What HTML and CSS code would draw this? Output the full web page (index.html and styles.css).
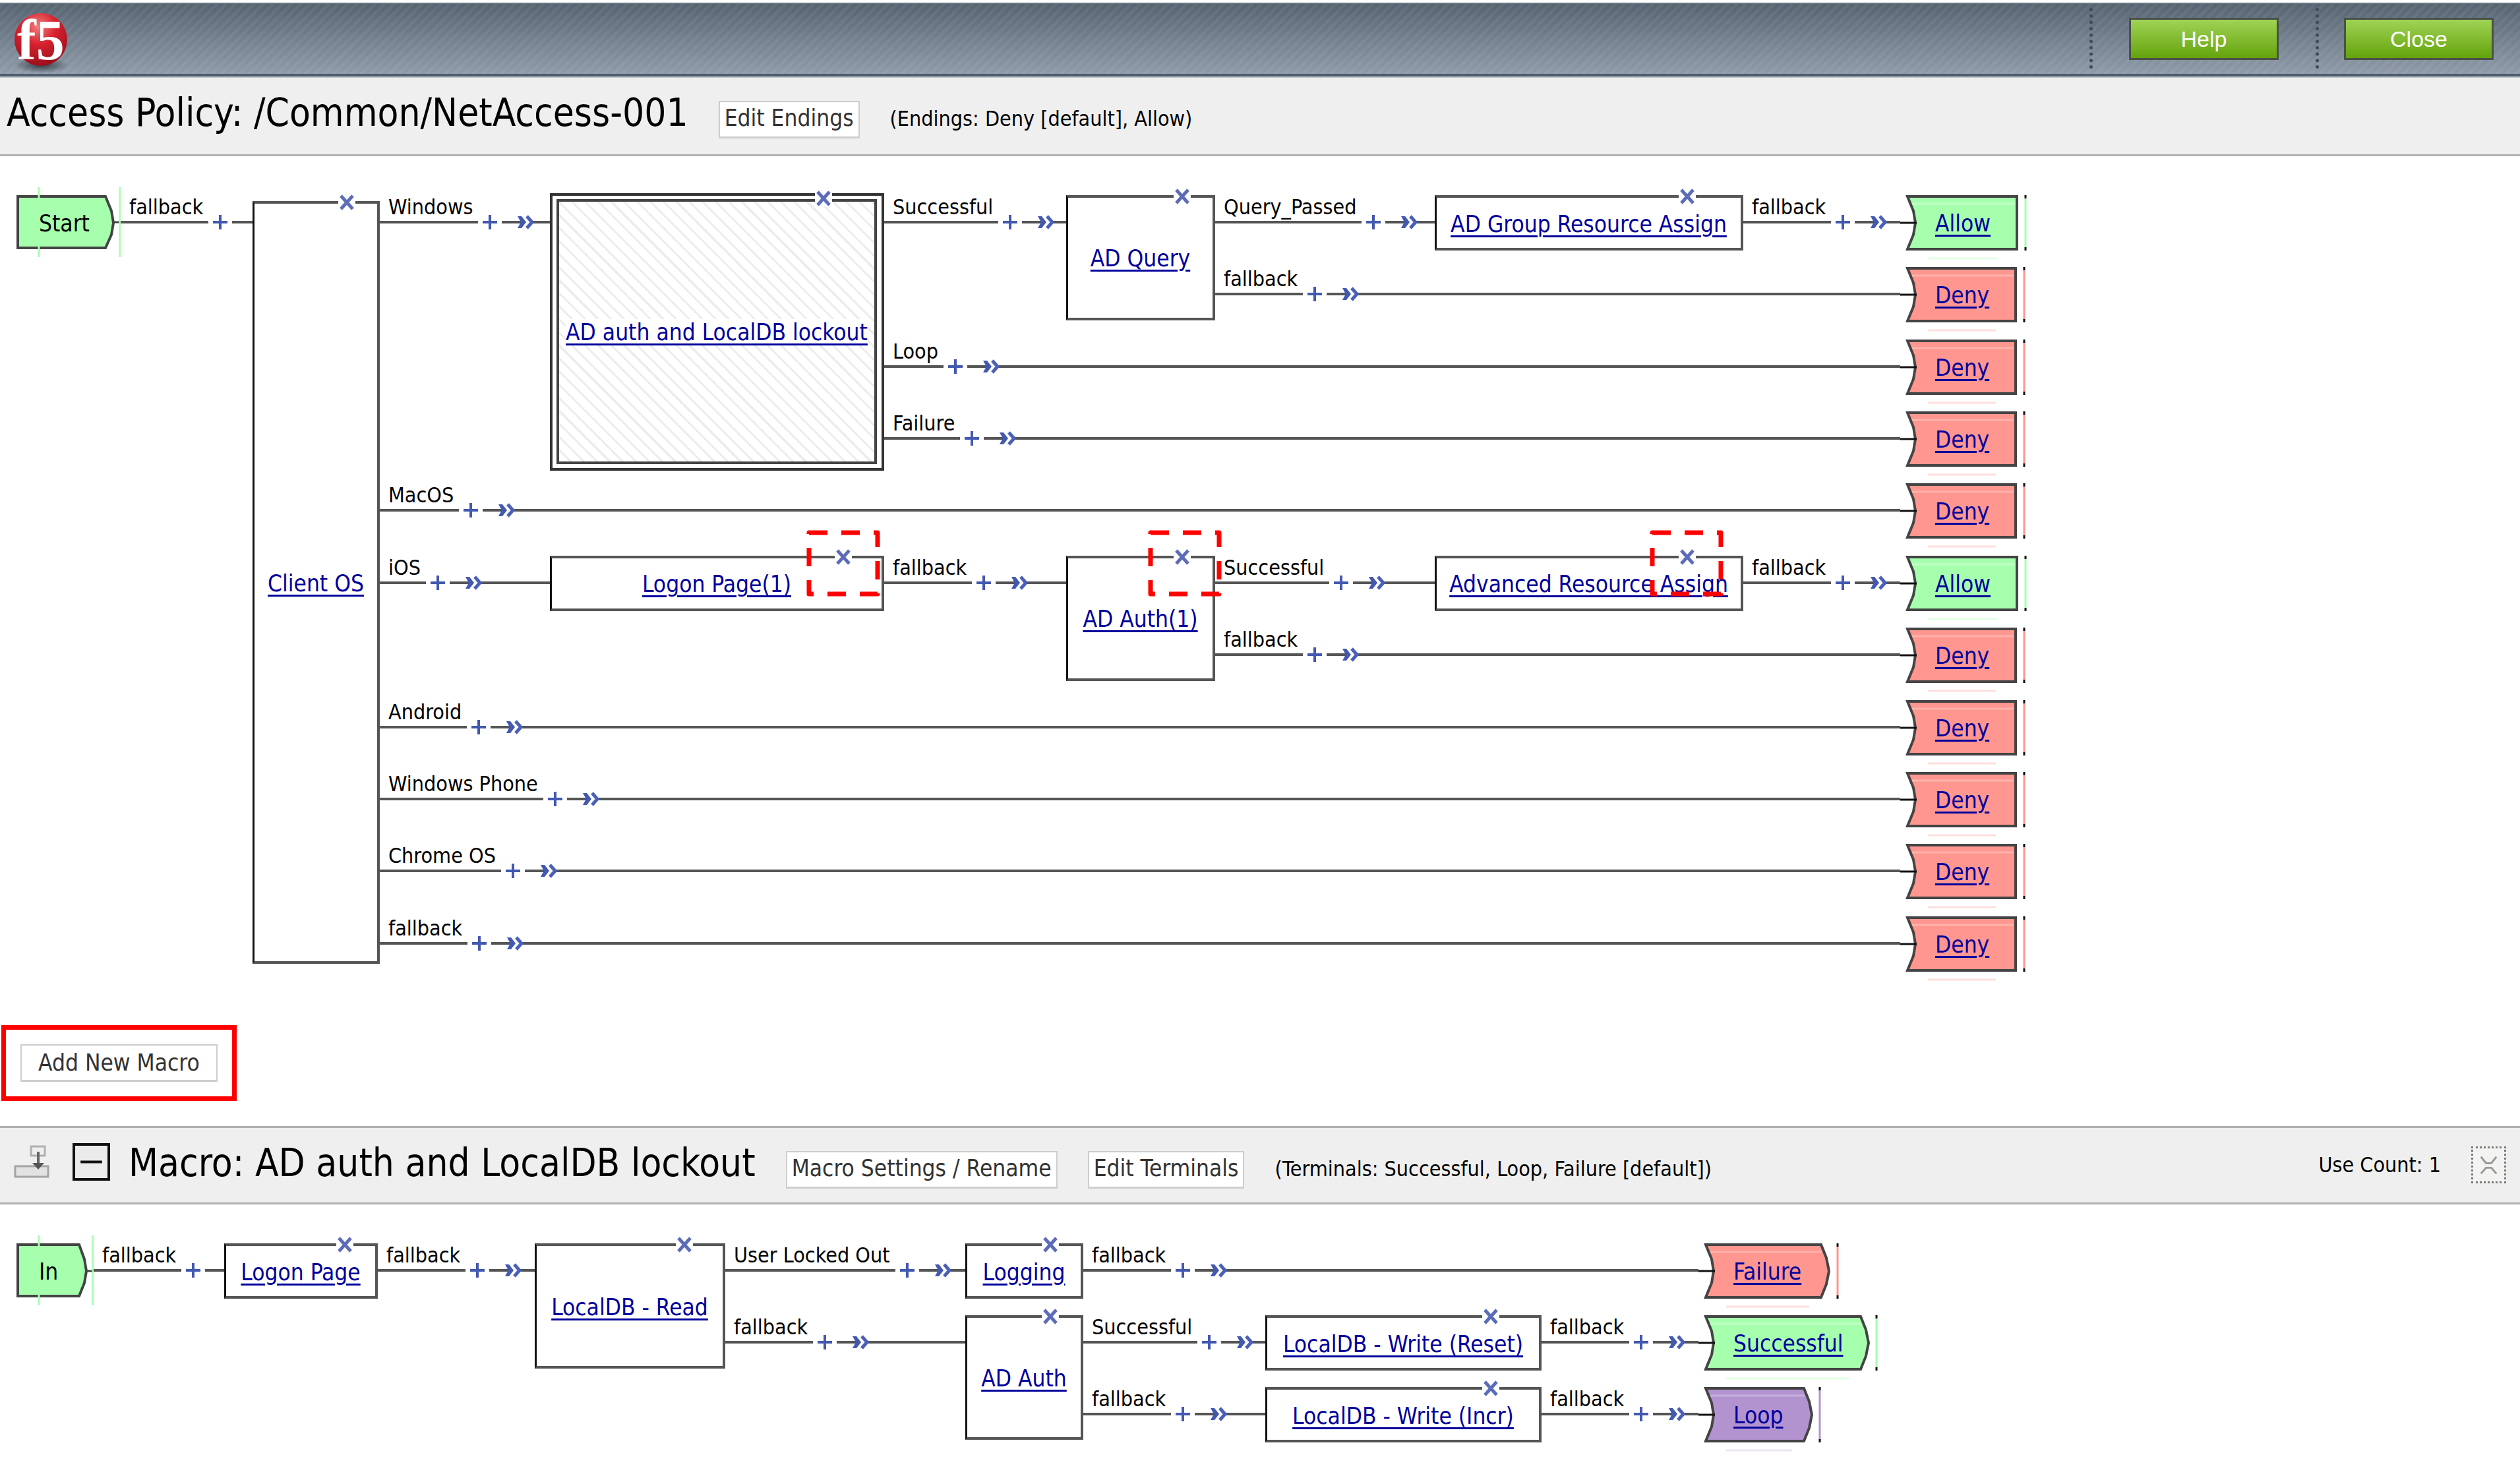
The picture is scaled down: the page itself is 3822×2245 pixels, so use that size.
FILE: index.html
```html
<!DOCTYPE html>
<html lang="en">
<head>
<meta charset="utf-8">
<title>Access Policy: /Common/NetAccess-001</title>
<link rel="stylesheet" href="styles.css">
</head>
<body>

<svg class="sprite" aria-hidden="true">
  <symbol id="plus" viewBox="0 0 36 24"><path d="M7 12h22M18 1v22" fill="none" stroke="#4358b0" stroke-width="4"/></symbol>
  <symbol id="cross" viewBox="0 0 26 24"><path d="M4 2l18 20M22 2L4 22" fill="none" stroke="#5d6cb8" stroke-width="5"/></symbol>
  <symbol id="arrows" viewBox="0 0 28 24">
    <path d="M0 12h12M22 12h6" stroke="#50545f" stroke-width="4"/>
    <path d="M1 3h6l7 9-7 9H1l5-9z" fill="#4358b0"/>
    <path d="M15 3l8 9-8 9" fill="none" stroke="#4a5fb8" stroke-width="5"/>
  </symbol>
  <symbol id="flag-allow" viewBox="0 0 196 112">
    <path d="M11 14H177V94H11L20 72L23 54L20 36Z" fill="#a5ffad" stroke="#444" stroke-width="4"/>
    <path d="M18 25H174" stroke="#c0ffc6" stroke-width="3"/>
    <path d="M42 108H148" stroke="#e4ffe6" stroke-width="3"/>
    <path d="M190 16V92" stroke="#a5ffad" stroke-width="3"/>
    <path d="M190 12v5M190 91v5M0 54H25" stroke="#111" stroke-width="3"/>
  </symbol>
  <symbol id="flag-deny" viewBox="0 0 196 112">
    <path d="M11 14H175V94H11L20 72L23 54L20 36Z" fill="#ff968f" stroke="#444" stroke-width="4"/>
    <path d="M18 25H172" stroke="#ffb2ad" stroke-width="3"/>
    <path d="M42 108H145" stroke="#ffdfdd" stroke-width="3"/>
    <path d="M188 16V92" stroke="#ff968f" stroke-width="3"/>
    <path d="M188 12v5M188 91v5M0 54H25" stroke="#111" stroke-width="3"/>
  </symbol>
  <symbol id="flag-failure" viewBox="0 0 280 112">
    <path d="M11 14H186L194 34L198 54L194 74L186 94H11L20 72L23 54L20 36Z" fill="#ff968f" stroke="#444" stroke-width="4"/>
    <path d="M18 25H187" stroke="#ffb2ad" stroke-width="3"/>
    <path d="M42 108H168" stroke="#ffdfdd" stroke-width="3"/>
    <path d="M211 16V92" stroke="#ff968f" stroke-width="3"/>
    <path d="M211 12v5M211 91v5M0 54H25" stroke="#111" stroke-width="3"/>
  </symbol>
  <symbol id="flag-successful" viewBox="0 0 280 112">
    <path d="M11 14H246L254 34L258 54L254 74L246 94H11L20 72L23 54L20 36Z" fill="#a5ffad" stroke="#444" stroke-width="4"/>
    <path d="M18 25H247" stroke="#c0ffc6" stroke-width="3"/>
    <path d="M42 108H228" stroke="#e4ffe6" stroke-width="3"/>
    <path d="M270 16V92" stroke="#a5ffad" stroke-width="3"/>
    <path d="M270 12v5M270 91v5M0 54H25" stroke="#111" stroke-width="3"/>
  </symbol>
  <symbol id="flag-loop" viewBox="0 0 280 112">
    <path d="M11 14H160L168 34L172 54L168 74L160 94H11L20 72L23 54L20 36Z" fill="#b292cf" stroke="#444" stroke-width="4"/>
    <path d="M18 25H161" stroke="#c6afdd" stroke-width="3"/>
    <path d="M42 108H142" stroke="#ece4f3" stroke-width="3"/>
    <path d="M184 16V92" stroke="#b292cf" stroke-width="3"/>
    <path d="M184 12v5M184 91v5M0 54H25" stroke="#111" stroke-width="3"/>
  </symbol>
</svg>

<header class="topbar">
  <svg class="logo" viewBox="0 0 96 96" role="img" aria-label="f5">
    <defs>
      <radialGradient id="ball" cx="45%" cy="25%" r="75%">
        <stop offset="0" stop-color="#f08080"/><stop offset=".45" stop-color="#d8222f"/><stop offset="1" stop-color="#9c0f1c"/>
      </radialGradient>
      <radialGradient id="shade"><stop offset="0" stop-color="#222b33" stop-opacity=".8"/><stop offset="1" stop-color="#222b33" stop-opacity="0"/></radialGradient>
    </defs>
    <ellipse cx="49" cy="83" rx="42" ry="12" fill="url(#shade)"/>
    <circle cx="48" cy="44" r="40" fill="url(#ball)"/>
    <text class="logo-text" x="12" y="74">f5</text>
  </svg>
  <div class="topbar-cell"><button class="action" type="button">Help</button></div>
  <div class="topbar-cell"><button class="action" type="button">Close</button></div>
</header>

<main>
<section>
  <div class="titlebar">
    <h1 class="title">Access Policy: /Common/NetAccess-001</h1>
    <button class="plain" type="button">Edit Endings</button>
    <span class="note">(Endings: Deny [default], Allow)</span>
  </div>

  <div class="flow policy">
    <div class="entry">
      <svg class="entry-shape start" viewBox="0 0 158 106" aria-hidden="true">
        <path d="M2 14H135L144 36L147 54L144 72L135 92H2Z" fill="#a5ffad" stroke="#444" stroke-width="4"/>
        <path d="M146 53H158" stroke="#444" stroke-width="3"/>
        <path d="M34 0V17M34 88V106M157 0V106" stroke="#a5ffad" stroke-width="3"/>
      </svg>
      <span class="entry-name">Start</span>
    </div>
    <div class="link to-client"><span class="label">fallback</span><button class="add" type="button" aria-label="Add item"><svg><use href="#plus"/></svg></button><i class="line"></i></div>
    <div class="box tall client"><a href="#">Client OS</a><button class="remove at-50" type="button" aria-label="Remove"><svg><use href="#cross"/></svg></button></div>
    <div class="branches">

      <div class="branch rows-4">
        <div class="link to-a"><span class="label">Windows</span><button class="add" type="button" aria-label="Add item"><svg><use href="#plus"/></svg></button><i class="dash"></i><svg class="arrows"><use href="#arrows"/></svg><i class="line"></i></div>
        <div class="box macro col-a"><span class="hatch"><a href="#">AD auth and LocalDB lockout</a></span><button class="remove at-92" type="button" aria-label="Remove"><svg><use href="#cross"/></svg></button></div>
        <div class="branches">
          <div class="branch rows-2">
            <div class="link to-b"><span class="label">Successful</span><button class="add" type="button" aria-label="Add item"><svg><use href="#plus"/></svg></button><i class="dash"></i><svg class="arrows"><use href="#arrows"/></svg><i class="line"></i></div>
            <div class="box tall col-b"><a href="#">AD Query</a><button class="remove at-50" type="button" aria-label="Remove"><svg><use href="#cross"/></svg></button></div>
            <div class="branches">
              <div class="branch">
                <div class="link to-c"><span class="label">Query_Passed</span><button class="add" type="button" aria-label="Add item"><svg><use href="#plus"/></svg></button><i class="dash"></i><svg class="arrows"><use href="#arrows"/></svg><i class="line"></i></div>
                <div class="box col-c"><a href="#">AD Group Resource Assign</a><button class="remove at-84" type="button" aria-label="Remove"><svg><use href="#cross"/></svg></button></div>
                <div class="link to-end"><span class="label">fallback</span><button class="add" type="button" aria-label="Add item"><svg><use href="#plus"/></svg></button><i class="dash"></i><svg class="arrows"><use href="#arrows"/></svg><i class="line"></i></div>
                <div class="ending"><svg><use href="#flag-allow"/></svg><a href="#">Allow</a></div>
              </div>
              <div class="branch">
                <div class="link"><span class="label">fallback</span><button class="add" type="button" aria-label="Add item"><svg><use href="#plus"/></svg></button><i class="dash"></i><svg class="arrows"><use href="#arrows"/></svg><i class="line"></i></div>
                <div class="ending"><svg><use href="#flag-deny"/></svg><a href="#">Deny</a></div>
              </div>
            </div>
          </div>
          <div class="branch">
            <div class="link"><span class="label">Loop</span><button class="add" type="button" aria-label="Add item"><svg><use href="#plus"/></svg></button><i class="dash"></i><svg class="arrows"><use href="#arrows"/></svg><i class="line"></i></div>
            <div class="ending"><svg><use href="#flag-deny"/></svg><a href="#">Deny</a></div>
          </div>
          <div class="branch">
            <div class="link"><span class="label">Failure</span><button class="add" type="button" aria-label="Add item"><svg><use href="#plus"/></svg></button><i class="dash"></i><svg class="arrows"><use href="#arrows"/></svg><i class="line"></i></div>
            <div class="ending"><svg><use href="#flag-deny"/></svg><a href="#">Deny</a></div>
          </div>
        </div>
      </div>

      <div class="branch">
        <div class="link"><span class="label">MacOS</span><button class="add" type="button" aria-label="Add item"><svg><use href="#plus"/></svg></button><i class="dash"></i><svg class="arrows"><use href="#arrows"/></svg><i class="line"></i></div>
        <div class="ending"><svg><use href="#flag-deny"/></svg><a href="#">Deny</a></div>
      </div>

      <div class="branch rows-2">
        <div class="link to-a"><span class="label">iOS</span><button class="add" type="button" aria-label="Add item"><svg><use href="#plus"/></svg></button><i class="dash"></i><svg class="arrows"><use href="#arrows"/></svg><i class="line"></i></div>
        <div class="box col-a"><a href="#">Logon Page(1)</a><button class="remove at-60" type="button" aria-label="Remove"><svg><use href="#cross"/></svg></button><svg class="callout callout-logon"><use href="#callout"/></svg></div>
        <div class="link to-b"><span class="label">fallback</span><button class="add" type="button" aria-label="Add item"><svg><use href="#plus"/></svg></button><i class="dash"></i><svg class="arrows"><use href="#arrows"/></svg><i class="line"></i></div>
        <div class="box tall col-b"><a href="#">AD Auth(1)</a><button class="remove at-50" type="button" aria-label="Remove"><svg><use href="#cross"/></svg></button><svg class="callout callout-auth"><use href="#callout"/></svg></div>
        <div class="branches">
          <div class="branch">
            <div class="link to-c"><span class="label">Successful</span><button class="add" type="button" aria-label="Add item"><svg><use href="#plus"/></svg></button><i class="dash"></i><svg class="arrows"><use href="#arrows"/></svg><i class="line"></i></div>
            <div class="box col-c"><a href="#">Advanced Resource Assign</a><button class="remove at-84" type="button" aria-label="Remove"><svg><use href="#cross"/></svg></button><svg class="callout callout-assign"><use href="#callout"/></svg></div>
            <div class="link to-end"><span class="label">fallback</span><button class="add" type="button" aria-label="Add item"><svg><use href="#plus"/></svg></button><i class="dash"></i><svg class="arrows"><use href="#arrows"/></svg><i class="line"></i></div>
            <div class="ending"><svg><use href="#flag-allow"/></svg><a href="#">Allow</a></div>
          </div>
          <div class="branch">
            <div class="link"><span class="label">fallback</span><button class="add" type="button" aria-label="Add item"><svg><use href="#plus"/></svg></button><i class="dash"></i><svg class="arrows"><use href="#arrows"/></svg><i class="line"></i></div>
            <div class="ending"><svg><use href="#flag-deny"/></svg><a href="#">Deny</a></div>
          </div>
        </div>
      </div>

      <div class="branch">
        <div class="link"><span class="label">Android</span><button class="add" type="button" aria-label="Add item"><svg><use href="#plus"/></svg></button><i class="dash"></i><svg class="arrows"><use href="#arrows"/></svg><i class="line"></i></div>
        <div class="ending"><svg><use href="#flag-deny"/></svg><a href="#">Deny</a></div>
      </div>
      <div class="branch">
        <div class="link"><span class="label">Windows Phone</span><button class="add" type="button" aria-label="Add item"><svg><use href="#plus"/></svg></button><i class="dash"></i><svg class="arrows"><use href="#arrows"/></svg><i class="line"></i></div>
        <div class="ending"><svg><use href="#flag-deny"/></svg><a href="#">Deny</a></div>
      </div>
      <div class="branch">
        <div class="link"><span class="label">Chrome OS</span><button class="add" type="button" aria-label="Add item"><svg><use href="#plus"/></svg></button><i class="dash"></i><svg class="arrows"><use href="#arrows"/></svg><i class="line"></i></div>
        <div class="ending"><svg><use href="#flag-deny"/></svg><a href="#">Deny</a></div>
      </div>
      <div class="branch">
        <div class="link"><span class="label">fallback</span><button class="add" type="button" aria-label="Add item"><svg><use href="#plus"/></svg></button><i class="dash"></i><svg class="arrows"><use href="#arrows"/></svg><i class="line"></i></div>
        <div class="ending"><svg><use href="#flag-deny"/></svg><a href="#">Deny</a></div>
      </div>
    </div>
  </div>

  <svg class="sprite" aria-hidden="true">
    <symbol id="callout" viewBox="0 0 112 101"><path d="M4 4H108V97H4Z" fill="none" stroke="#f00" stroke-width="7" stroke-dasharray="28 21" stroke-linejoin="round"/></symbol>
  </svg>

  <div class="new-macro"><button class="plain wide" type="button">Add New Macro</button></div>
</section>

<section>
  <div class="titlebar macro-title">
    <div class="tools">
      <svg class="insert" viewBox="0 0 54 50" aria-hidden="true">
        <path d="M26 2H47V16H26Z" fill="none" stroke="#b0b0b0" stroke-width="3"/>
        <path d="M2 32H52V48H2Z" fill="#e2e2e2" stroke="#a4a4a4" stroke-width="3"/>
        <path d="M37 10V28" stroke="#666" stroke-width="4"/>
        <path d="M28 27H46L37 37Z" fill="#555"/>
      </svg>
      <button class="collapse" type="button" aria-label="Collapse"><svg viewBox="0 0 48 48"><path d="M8 24H40" stroke="#111" stroke-width="4"/></svg></button>
    </div>
    <h2 class="title">Macro: AD auth and LocalDB lockout</h2>
    <button class="plain" type="button">Macro Settings / Rename</button>
    <button class="plain" type="button">Edit Terminals</button>
    <span class="note">(Terminals: Successful, Loop, Failure [default])</span>
    <div class="usage">
      <span>Use Count: 1</span>
      <button class="discard" type="button" aria-label="Delete macro"><svg viewBox="0 0 48 50"><path d="M12 12L20 22H28L36 12M12 38L20 29H28L36 38" fill="none" stroke="#999" stroke-width="3"/></svg></button>
    </div>
  </div>

  <div class="flow">
    <div class="entry">
      <svg class="entry-shape in" viewBox="0 0 117 106" aria-hidden="true">
        <path d="M2 14H95L103 36L106 54L103 72L95 92H2Z" fill="#a5ffad" stroke="#444" stroke-width="4"/>
        <path d="M105 54H117" stroke="#444" stroke-width="3"/>
        <path d="M34 0V17M34 88V106M116 0V106" stroke="#a5ffad" stroke-width="3"/>
      </svg>
      <span class="entry-name">In</span>
    </div>
    <div class="link to-logon"><span class="label">fallback</span><button class="add" type="button" aria-label="Add item"><svg><use href="#plus"/></svg></button><i class="line"></i></div>
    <div class="box logon"><a href="#">Logon Page</a><button class="remove at-50" type="button" aria-label="Remove"><svg><use href="#cross"/></svg></button></div>
    <div class="link to-end"><span class="label">fallback</span><button class="add" type="button" aria-label="Add item"><svg><use href="#plus"/></svg></button><i class="dash"></i><svg class="arrows"><use href="#arrows"/></svg><i class="line"></i></div>
    <div class="box read"><a href="#">LocalDB - Read</a><button class="remove at-60" type="button" aria-label="Remove"><svg><use href="#cross"/></svg></button></div>
    <div class="branches">
      <div class="branch">
        <div class="link to-logging"><span class="label">User Locked Out</span><button class="add" type="button" aria-label="Add item"><svg><use href="#plus"/></svg></button><i class="dash"></i><svg class="arrows"><use href="#arrows"/></svg><i class="line"></i></div>
        <div class="box auth"><a href="#">Logging</a><button class="remove at-50" type="button" aria-label="Remove"><svg><use href="#cross"/></svg></button></div>
        <div class="link"><span class="label">fallback</span><button class="add" type="button" aria-label="Add item"><svg><use href="#plus"/></svg></button><i class="dash"></i><svg class="arrows"><use href="#arrows"/></svg><i class="line"></i></div>
        <div class="ending terminal"><svg><use href="#flag-failure"/></svg><a href="#">Failure</a></div>
      </div>
      <div class="branch rows-2">
        <div class="link to-logging"><span class="label">fallback</span><button class="add" type="button" aria-label="Add item"><svg><use href="#plus"/></svg></button><i class="dash"></i><svg class="arrows"><use href="#arrows"/></svg><i class="line"></i></div>
        <div class="box tall auth"><a href="#">AD Auth</a><button class="remove at-50" type="button" aria-label="Remove"><svg><use href="#cross"/></svg></button></div>
        <div class="branches">
          <div class="branch">
            <div class="link to-b"><span class="label">Successful</span><button class="add" type="button" aria-label="Add item"><svg><use href="#plus"/></svg></button><i class="dash"></i><svg class="arrows"><use href="#arrows"/></svg><i class="line"></i></div>
            <div class="box write"><a href="#">LocalDB - Write (Reset)</a><button class="remove at-76" type="button" aria-label="Remove"><svg><use href="#cross"/></svg></button></div>
            <div class="link to-end"><span class="label">fallback</span><button class="add" type="button" aria-label="Add item"><svg><use href="#plus"/></svg></button><i class="dash"></i><svg class="arrows"><use href="#arrows"/></svg><i class="line"></i></div>
            <div class="ending terminal"><svg><use href="#flag-successful"/></svg><a href="#">Successful</a></div>
          </div>
          <div class="branch">
            <div class="link to-b"><span class="label">fallback</span><button class="add" type="button" aria-label="Add item"><svg><use href="#plus"/></svg></button><i class="dash"></i><svg class="arrows"><use href="#arrows"/></svg><i class="line"></i></div>
            <div class="box write"><a href="#">LocalDB - Write (Incr)</a><button class="remove at-76" type="button" aria-label="Remove"><svg><use href="#cross"/></svg></button></div>
            <div class="link to-end"><span class="label">fallback</span><button class="add" type="button" aria-label="Add item"><svg><use href="#plus"/></svg></button><i class="dash"></i><svg class="arrows"><use href="#arrows"/></svg><i class="line"></i></div>
            <div class="ending terminal"><svg><use href="#flag-loop"/></svg><a href="#">Loop</a></div>
          </div>
        </div>
      </div>
    </div>
  </div>
</section>
</main>
</body>
</html>
```
FILE: styles.css
```css
* { box-sizing: border-box; }

body {
  margin: 0;
  background: #fff;
  color: #000;
  font: 32px/36px "DejaVu Sans Condensed", "DejaVu Sans", sans-serif;
}

button {
  margin: 0;
  padding: 0;
  border: 0;
  border-radius: 0;
  background: none;
  font: inherit;
  cursor: pointer;
}

svg { display: block; flex: none; }
.sprite { position: absolute; width: 0; height: 0; }

/* Top bar */
.topbar {
  display: flex;
  align-items: stretch;
  height: 112px;
  margin-top: 4px;
  border-top: 2px solid #6b7782;
  border-bottom: 4px solid #4c5e70;
  background:
    repeating-linear-gradient(135deg, rgba(255, 255, 255, .05) 0 5px, transparent 5px 10px),
    linear-gradient(#566471, #8f9ba8);
}
.logo { width: 96px; height: 96px; margin: 10px auto 0 14px; overflow: visible; }
.logo-text { fill: #fff; font: bold 86px "Liberation Serif", serif; }
.topbar-cell {
  display: flex;
  align-items: flex-start;
  margin: 6px 0 8px;
  padding: 15px 40px 0 55px;
  border-left: 5px dotted #3d4a57;
}
.topbar-cell + .topbar-cell { padding-left: 38px; }
.topbar-cell:nth-last-child(2) { padding-right: 56px; }
.action {
  width: 227px;
  height: 64px;
  border: 3px solid #4a5148;
  background: linear-gradient(#9fd355, #64a30c);
  color: #fff;
  font: 34px/56px "Liberation Sans", sans-serif;
}

/* Section title bars */
.titlebar {
  display: flex;
  align-items: baseline;
  gap: 46px;
  height: 121px;
  padding: 19px 21px 0 10px;
  border-top: 2px solid #c4c6c8;
  border-bottom: 3px solid #b0b0b0;
  background: #efefef;
}
.macro-title { height: 119px; border-top: 3px solid #b0b0b0; }
.title { margin: 0; font-size: 58px; line-height: 68px; font-weight: normal; white-space: nowrap; }
.note { white-space: nowrap; }
.plain {
  height: 57px;
  padding: 0 7px 3px;
  border: 2px solid #cdcdcd;
  border-bottom-width: 3px;
  background: #fff;
  color: #333;
  font-size: 35px;
  line-height: 49px;
  white-space: nowrap;
}
.plain.wide { padding: 0 25px; }

.tools {
  display: flex;
  align-self: flex-start;
  align-items: center;
  gap: 35px;
  height: 64px;
  margin: 0 -18px 0 11px;
}
.insert { width: 54px; height: 50px; }
.collapse { width: 57px; height: 57px; border: 4px solid #111; background: #ebebeb; }
.usage {
  display: flex;
  align-self: flex-start;
  align-items: center;
  gap: 46px;
  height: 74px;
  margin-left: auto;
}
.discard { width: 53px; height: 56px; border: 3px dotted #777; background: #f3f3f1; }

/* Policy diagram */
.flow {
  display: flex;
  width: max-content;
  padding: 47px 0 43px 25px;
}
.policy { min-height: 1293px; }

.branches { display: flex; flex: 1 0 auto; flex-direction: column; }
.branch { display: flex; flex: 1 0 109px; }
.rows-2 { flex: 2 0 218px; }
.rows-4 { flex: 4 0 436px; }

.entry { position: relative; height: 106px; }
.entry-shape { height: 106px; }
.start { width: 158px; }
.in { width: 117px; }
.entry-name { position: absolute; top: 0; left: 34px; font-size: 35px; line-height: 110px; }

.link { display: flex; flex: 1 0 auto; align-items: center; height: 106px; }
.label {
  display: flex;
  align-self: flex-start;
  align-items: flex-end;
  height: 55px;
  padding: 0 8px 3px 13px;
  border-bottom: 4px solid #555;
  white-space: nowrap;
}
.add svg { width: 36px; height: 24px; }
.dash { width: 23px; height: 4px; background: #555; }
.arrows { width: 28px; height: 24px; }
.line { flex: 1; height: 4px; background: #555; }

.to-client { flex: 0 0 200px; }
.to-logon { flex: 0 0 198px; }
.to-a { flex: 0 0 258px; }
.to-b { flex: 0 0 276px; }
.to-c { flex: 0 0 333px; }
.to-end { flex: 0 0 238px; }
.to-logging { flex: 0 0 364px; }

.box {
  position: relative;
  display: flex;
  flex: none;
  align-items: center;
  justify-content: center;
  height: 84px;
  margin-top: 12px;
  padding-top: 3px;
  border: 4px solid #555;
  border-left: 3px solid #111;
  background: #fff;
}
.box a, .ending a {
  color: #00009c;
  font-size: 35px;
  line-height: 40px;
  white-space: nowrap;
  text-decoration-thickness: 3px;
  text-underline-offset: 5px;
}
.tall { height: auto; margin-bottom: 17px; }
.client { width: 193px; margin-top: 21px; margin-bottom: 25px; }
.col-a { width: 507px; }
.col-b { width: 226px; }
.col-c { width: 468px; }
.logon { width: 233px; }
.read { width: 289px; height: 190px; }
.auth { width: 179px; }
.write { width: 419px; }

.macro {
  align-items: stretch;
  height: auto;
  margin: 9px 0 7px;
  padding: 5px 7px 6px 6px;
  border: 4px solid #333;
}
.hatch {
  display: flex;
  flex: 1;
  align-items: center;
  justify-content: center;
  padding-top: 2px;
  border: 4px solid #444;
  background: repeating-linear-gradient(45deg, #fff 0 11px, #ececec 11px 14px);
}
.hatch a { background: #fff; }

.remove { position: absolute; top: -14px; background: #fff; }
.remove svg { width: 26px; height: 24px; }
.macro .remove { top: -8px; }
.at-50 { right: 33px; }
.at-60 { right: 45px; }
.at-76 { right: 60px; }
.at-84 { right: 68px; }
.at-92 { right: 75px; }

.callout { position: absolute; top: -43px; width: 112px; height: 101px; pointer-events: none; }
.callout-logon { right: 2px; }
.callout-auth { right: -14px; }
.callout-assign { right: 26px; }

.ending { position: relative; flex: none; width: 196px; height: 106px; padding-left: 53px; }
.ending svg { position: absolute; top: 0; left: 0; width: 196px; height: 112px; }
.ending a { position: relative; line-height: 110px; }
.ending.terminal, .terminal svg { width: 280px; }

.new-macro {
  width: max-content;
  margin: 25px 0 38px 2px;
  padding: 22px;
  border: 7px solid #f00;
}
```
